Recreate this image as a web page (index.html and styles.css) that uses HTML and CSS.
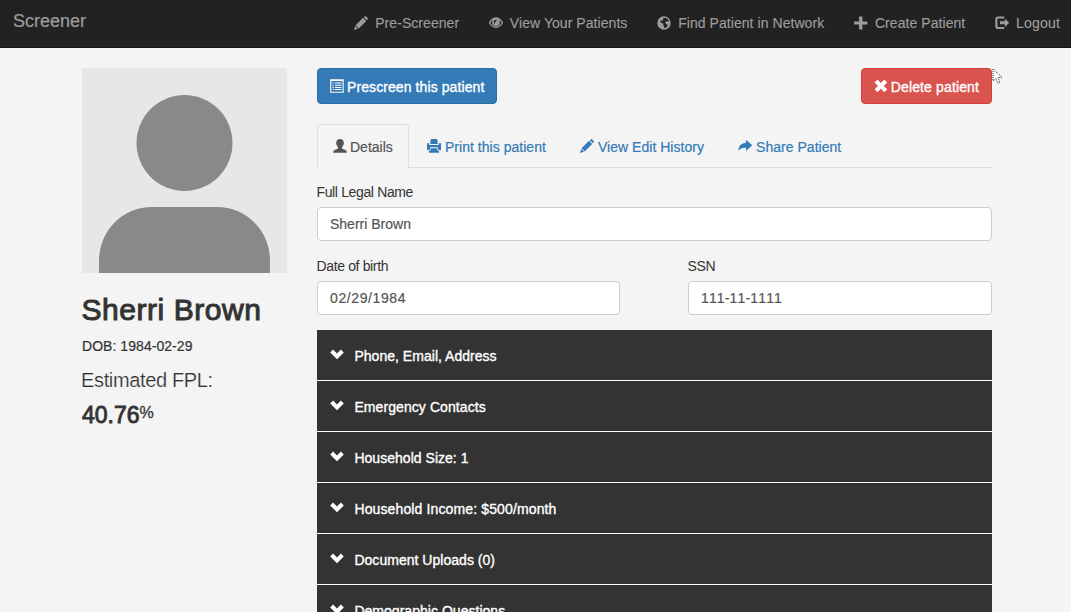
FILE: index.html
```html
<!DOCTYPE html>
<html lang="en">
<head>
<meta charset="utf-8">
<title>Screener</title>
<link rel="stylesheet" href="styles.css">
</head>
<body>
<svg class="sprite" aria-hidden="true">
  <symbol id="pencil" viewBox="0 0 14 14"><path d="M0 14l1.2-4 2.8 2.8zM1.600 9.300L9 1.800l3.200 3.200-7.500 7.400zM9.800 1.200l.9-.8q.7-.7 1.4 0l1.500 1.500q.7.700 0 1.400l-.8.900z"/></symbol>
  <symbol id="eye" viewBox="0 0 14 14"><path fill-rule="evenodd" d="M-.3 6.800Q3 1.300 7 1.300t7.300 5.500q-3.300 5.300-7.300 5.300T-.3 6.800zm1.600 0q2.400 3.900 5.700 3.900t5.700-3.900q-1.200-2-2.700-3 .8 1.200.8 2.500a3.800 3.800 0 0 1-7.600 0q0-1.300.8-2.500-1.500 1-2.700 3zM7.200 3.600q-2.500.2-2.500 2.400 0 1.700 1.500 2-.6-1.200.1-2T7.900 4.500z"/></symbol>
  <symbol id="globe" viewBox="0 0 14 14"><path fill-rule="evenodd" d="M7 .300a6.700 6.700 0 1 0 0 13.400A6.700 6.700 0 1 0 7 .300zM8.300 1.800l2.400 1.100 1.500 2.500-.5.300-1-.7-1.300.2-1.200 1.400.6 1.500 1.500.4.200 1.400-1.300 1.600-1.600.8-.5-1.900-.9-1.200.3-1.500L4.700 6.900 3.200 5.300l.7-1.100 1.500.6.800-1-.5-1.200z"/></symbol>
  <symbol id="plus" viewBox="0 0 14 14"><path d="M5.100.5h3.300v4.900h5v3.200h-5v4.900H5.100V8.600h-5V5.400h5z"/></symbol>
  <symbol id="logout" viewBox="0 0 14 14"><path d="M9.200.5H3Q.3.5.3 3.200v7.300Q.3 13 3 13h6.200v-2H3.400q-1 0-1-1V3.600q0-1 1-1h5.800zM9.900 2.700v2.500H5v3.100h4.900v2.600L14.200 6.800z"/></symbol>
  <symbol id="list" viewBox="0 0 14 14"><path fill-rule="evenodd" d="M.2.2h13.500v13.600H.2zM1.300 2v10.700h11.300V2zM2.600 3.500h1.200v1H2.600zM4.900 3.500h6.500v1H4.900zM2.600 5.700h1.200v1H2.600zM4.900 5.700h6.500v1H4.900zM2.600 7.900h1.200v1H2.600zM4.900 7.900h6.500v1H4.900zM2.600 10.100h1.200v1H2.600zM4.900 10.100h6.500v1H4.900z"/></symbol>
  <symbol id="remove" viewBox="0 0 14 14"><path d="M3.500.6L6.900 4 10.300.6l2.900 2.900L9.800 6.900l3.400 3.400-2.900 2.900L6.900 9.800l-3.400 3.400L.6 10.300 4 6.900.6 3.500z"/></symbol>
  <symbol id="user" viewBox="0 0 14 14"><path d="M7 0Q10.700 0 10.700 3.700q.4.200.1 1.300-.3 1-.7 1.200-.3 1.500-1.100 2.100v.9q.3.700 2.300 1.400 2.700 1 2.700 2.700v.5H0v-.5q0-1.700 2.700-2.700Q4.700 9.900 5 9.200v-.9Q4.200 7.700 3.900 6.200 3.500 6 3.200 5q-.3-1.100.1-1.300Q3.300 0 7 0z"/></symbol>
  <symbol id="print" viewBox="0 0 14 14"><path fill-rule="evenodd" d="M4 0h6q.5 1.500.7 3.200V5H3.300V3.200Q3.500 1.500 4 0zM0 4.200h2.200V6h9.600V4.200H14V11h-2.800l-.3-2.700H3.100L2.800 11H0zM3.800 9.300h6.400l.3 1.700 1.600 1.200v1.500H1.900v-1.500L3.500 11z"/></symbol>
  <symbol id="share" viewBox="0 0 14 14"><path d="M8 .700l6.200 5.600L8 11.900V8.700Q3.100 8.200.2 11.800.700 4.300 8 3.800z"/></symbol>
  <symbol id="chevron" viewBox="0 0 14 14"><path d="M.2 5.500L3.100 2.600 7 6.400l3.900-3.800 2.900 2.900L7 12.300z"/></symbol>
</svg>

<header class="navbar">
  <a class="brand">Screener</a>
  <nav class="nav">
    <a class="nav-item"><svg class="icon"><use href="#pencil"/></svg>Pre-Screener</a>
    <a class="nav-item"><svg class="icon"><use href="#eye"/></svg>View Your Patients</a>
    <a class="nav-item"><svg class="icon"><use href="#globe"/></svg>Find Patient in Network</a>
    <a class="nav-item"><svg class="icon"><use href="#plus"/></svg>Create Patient</a>
    <a class="nav-item logout"><svg class="icon"><use href="#logout"/></svg>Logout</a>
  </nav>
</header>

<main class="page">
  <aside class="profile">
    <svg class="avatar" viewBox="0 0 205 205"><path fill="#e7e7e7" d="M0 0h205v205H0z"/><circle cx="102.500" cy="75" r="48" fill="#898989"/><path fill="#898989" d="M17 205v-12a53 53.500 0 0 1 53-54h65a53 53.500 0 0 1 53 54v12z"/></svg>
    <h1 class="name">Sherri Brown</h1>
    <p class="dob">DOB: 1984-02-29</p>
    <p class="fpl-label">Estimated FPL:</p>
    <p class="fpl"><span class="fpl-value">40.76</span><span class="fpl-unit">%</span></p>
  </aside>

  <section class="content">
    <div class="actions">
      <button class="btn btn-primary"><svg class="icon"><use href="#list"/></svg>Prescreen this patient</button>
      <button class="btn btn-danger"><svg class="icon"><use href="#remove"/></svg>Delete patient</button>
      <svg class="pointer" viewBox="0 0 12 18"><path class="pointer-shape" d="M1 1v12l3-2.500 2 5 2-1-2-5h4z"/></svg>
    </div>

    <div class="tabs">
      <a class="tab active"><svg class="icon"><use href="#user"/></svg>Details</a>
      <a class="tab"><svg class="icon"><use href="#print"/></svg>Print this patient</a>
      <a class="tab"><svg class="icon"><use href="#pencil"/></svg>View Edit History</a>
      <a class="tab"><svg class="icon"><use href="#share"/></svg>Share Patient</a>
    </div>

    <form class="form">
      <label class="field full"><span class="label">Full Legal Name</span><input class="input" value="Sherri Brown"></label>
      <label class="field"><span class="label">Date of birth</span><input class="input date" value="02/29/1984"></label>
      <label class="field"><span class="label">SSN</span><input class="input ssn" value="111-11-1111"></label>
    </form>

    <div class="accordion">
      <div class="panel"><svg class="icon"><use href="#chevron"/></svg>Phone, Email, Address</div>
      <div class="panel contacts"><svg class="icon"><use href="#chevron"/></svg>Emergency Contacts</div>
      <div class="panel"><svg class="icon"><use href="#chevron"/></svg>Household Size: 1</div>
      <div class="panel income"><svg class="icon"><use href="#chevron"/></svg>Household Income: $500/month</div>
      <div class="panel"><svg class="icon"><use href="#chevron"/></svg>Document Uploads (0)</div>
      <div class="panel"><svg class="icon"><use href="#chevron"/></svg>Demographic Questions</div>
    </div>
  </section>
</main>
</body>
</html>
```

FILE: styles.css
```css
* { box-sizing: border-box; }
html { height: 100%; overflow: hidden; }
body {
  margin: 0;
  height: 100%;
  overflow: hidden;
  background: #f4f4f4;
  color: #333;
  font: 14px/20px "Liberation Sans", Arial, sans-serif;
}
h1, p { margin: 0; }
.sprite { display: none; }
.icon { width: 14px; height: 14px; flex: none; fill: currentColor; overflow: visible; }

.navbar {
  display: flex;
  justify-content: space-between;
  height: 48px;
  padding: 0 11px 0 13px;
  background: #222;
  border-bottom: 1px solid #151515;
  color: #9d9d9d;
}
.brand { padding-top: 11px; font-size: 18px; -webkit-text-stroke: 0.2px; }
.nav { display: flex; gap: 29.7px; padding-top: 13px; letter-spacing: 0.06px; -webkit-text-stroke: 0.15px; }
.nav-item { display: flex; gap: 7px; white-space: nowrap; }
.nav-item .icon { margin-top: 3px; stroke: none; }
.logout { letter-spacing: 0.2px; }

.page { display: flex; gap: 30px; padding: 20px 79px 0 82px; }
.profile { width: 205px; flex: none; }
.avatar { display: block; width: 205px; height: 205px; }
.name {
  margin: 20px 0 0 -0.5px;
  font-size: 30px;
  line-height: 33px;
  font-weight: 400;
  letter-spacing: 0.55px;
  -webkit-text-stroke: 1px;
  white-space: nowrap;
}
.dob { margin-top: 10px; letter-spacing: 0.05px; -webkit-text-stroke: 0.2px; }
.fpl-label {
  margin: 12px 0 0 -1px;
  font-size: 20px;
  line-height: 24px;
  letter-spacing: -0.35px;
  -webkit-text-stroke: 0.2px #f4f4f4;
}
.fpl { display: flex; margin-top: 10px; line-height: 26px; }
.fpl-value { font-size: 23px; -webkit-text-stroke: 0.9px; }
.fpl-unit { font-size: 16px; line-height: 21px; -webkit-text-stroke: 0.3px; }

.content { width: 675px; flex: none; }
.actions { position: relative; display: flex; justify-content: space-between; }
.btn {
  display: flex;
  align-items: center;
  gap: 3px;
  height: 36px;
  padding: 2px 12px 0;
  border: 1px solid;
  border-radius: 4px;
  color: #fff;
  font: inherit;
  letter-spacing: 0.09px;
  -webkit-text-stroke: 0.35px;
  white-space: nowrap;
}
.btn .icon { margin-top: -3px; stroke: none; }
.btn-primary { background: #337ab7; border-color: #2e6da4; }
.btn-danger { background: #d9534f; border-color: #d43f3a; letter-spacing: 0.13px; }
.pointer { position: absolute; left: 675px; top: 0; width: 12px; height: 18px; }
.pointer-shape { fill: #fff; stroke: #333; stroke-width: 1; stroke-dasharray: 1 1; }

.tabs {
  display: flex;
  gap: 2px;
  height: 44px;
  margin-top: 20px;
  border-bottom: 1px solid #ddd;
  color: #337ab7;
}
.tab {
  display: flex;
  gap: 4px;
  height: 44px;
  padding: 12px 15px 0;
  border: 1px solid transparent;
  border-bottom: 0;
  white-space: nowrap;
  letter-spacing: 0.03px;
  -webkit-text-stroke: 0.2px;
}
.tab .icon { margin-top: 2px; stroke: none; }
.tab.active {
  width: 92px;
  gap: 3px;
  border-color: #ddd;
  border-radius: 4px 4px 0 0;
  background: #f4f4f4;
  color: #555;
  letter-spacing: 0;
}

.form { display: grid; grid-template-columns: 303px 304px; justify-content: space-between; row-gap: 15px; padding-top: 14px; }
.field { display: block; }
.full { grid-column: 1 / -1; }
.label { display: block; height: 25px; margin-left: -0.5px; letter-spacing: -0.36px; }
.input {
  display: block;
  width: 100%;
  height: 34px;
  padding: 0 12px;
  border: 1px solid #ccc;
  border-radius: 4px;
  background: #fff;
  color: #555;
  font: inherit;
  -webkit-text-stroke: 0.2px;
}
.input.date { letter-spacing: 0.6px; }
.input.ssn { letter-spacing: 0.15px; font-kerning: none; }

.accordion { margin-top: 15px; }
.panel {
  display: flex;
  gap: 10.4px;
  height: 51px;
  padding: 16px 13px 0;
  border-bottom: 1px solid #fff;
  background: #333;
  color: #fff;
  letter-spacing: 0.03px;
  -webkit-text-stroke: 0.35px;
}
.panel .icon { margin-top: 1px; stroke: none; }
.contacts { letter-spacing: 0.08px; }
.income { letter-spacing: 0.13px; }
```
